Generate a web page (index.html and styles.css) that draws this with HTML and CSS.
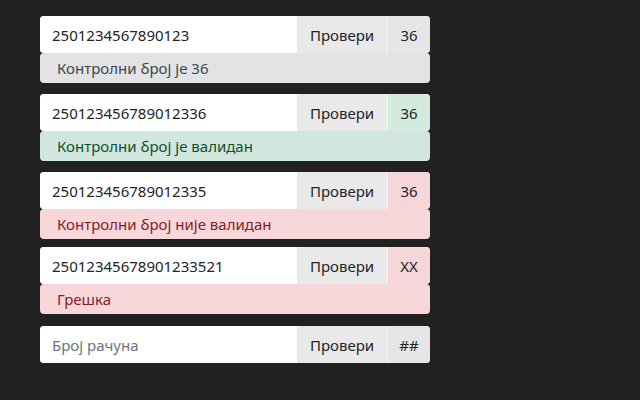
FILE: index.html
```html
<!DOCTYPE html>
<html lang="sr">
<head>
<meta charset="utf-8">
<title>Контролни број</title>
<link rel="stylesheet" href="styles.css">
</head>
<body>
<main class="list">
  <section class="group">
    <div class="row">
      <div class="field">2501234567890123</div>
      <div class="btn">Провери</div>
      <div class="addon addon-gray">36</div>
    </div>
    <div class="alert alert-gray">Контролни број је 36</div>
  </section>
  <section class="group">
    <div class="row">
      <div class="field">250123456789012336</div>
      <div class="btn">Провери</div>
      <div class="addon addon-green">36</div>
    </div>
    <div class="alert alert-green">Контролни број је валидан</div>
  </section>
  <section class="group g3">
    <div class="row">
      <div class="field">250123456789012335</div>
      <div class="btn">Провери</div>
      <div class="addon addon-red">36</div>
    </div>
    <div class="alert alert-red">Контролни број није валидан</div>
  </section>
  <section class="group g4">
    <div class="row">
      <div class="field">25012345678901233521</div>
      <div class="btn">Провери</div>
      <div class="addon addon-red">XX</div>
    </div>
    <div class="alert alert-red">Грешка</div>
  </section>
  <section class="group">
    <div class="row">
      <div class="field placeholder">Број рачуна</div>
      <div class="btn">Провери</div>
      <div class="addon addon-gray">##</div>
    </div>
  </section>
</main>
</body>
</html>
```
FILE: styles.css
```css
html, body {
  margin: 0;
  padding: 0;
  background: #212121;
}
body {
  width: 640px;
  height: 400px;
  overflow: hidden;
  font-family: "Noto Sans", "Open Sans", sans-serif;
  font-size: 15px;
}
.list {
  display: flex;
  flex-direction: column;
  gap: 11px;
  padding: 16px 0 0 40px;
}
.group {
  width: 390px;
  display: flex;
  flex-direction: column;
}
.g3 { margin-bottom: -3px; }
.g4 { margin-bottom: 1px; }
.row {
  display: flex;
  height: 37px;
  border-radius: 4px;
  overflow: hidden;
  background: #fff;
}
.field {
  flex: 1;
  display: flex;
  align-items: center;
  padding-left: 12px;
  color: #212529;
  background: #fff;
}
.placeholder { color: #6c757d; }
.btn {
  width: 90px;
  display: flex;
  align-items: center;
  justify-content: center;
  background: #e9e9ea;
  color: #212529;
  border-right: 1px solid #f4f4f4;
}
.addon {
  width: 42px;
  display: flex;
  align-items: center;
  justify-content: center;
  color: #212529;
}
.addon-gray { background: #e6e6e7; }
.addon-green { background: #d4eadc; }
.addon-red { background: #f7d6da; }
.alert {
  height: 30px;
  display: flex;
  align-items: center;
  padding-left: 17px;
  border-radius: 4px;
}
.alert-gray { background: #e2e3e5; color: #41464b; }
.alert-green { background: #d1e7dd; color: #0f5132; }
.alert-red { background: #f8d7da; color: #842029; }
```
